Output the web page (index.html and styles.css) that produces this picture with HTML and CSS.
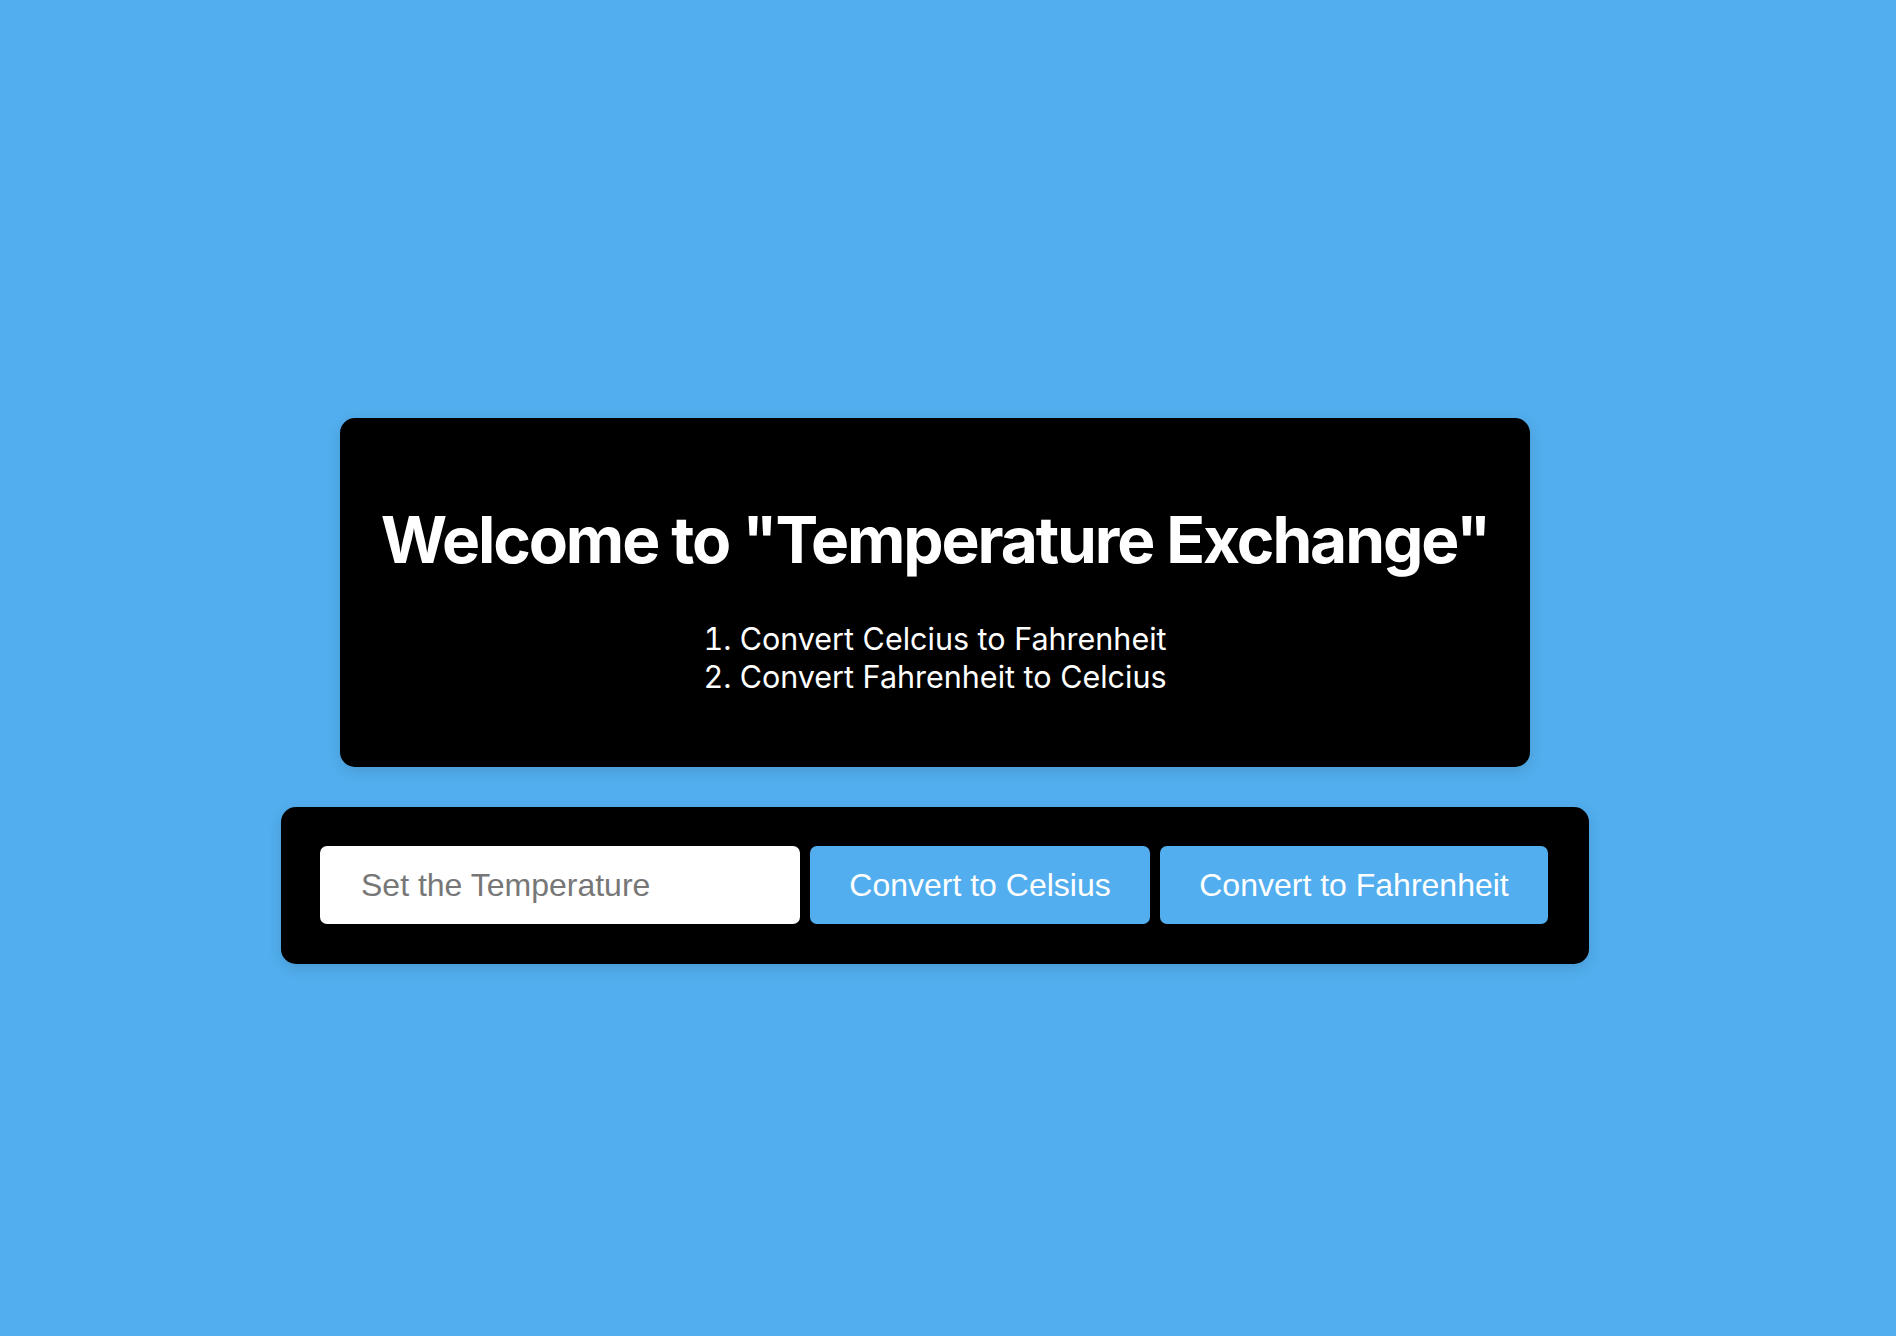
FILE: index.html
```html
<!DOCTYPE html>
<html lang="en">
<head>
<meta charset="utf-8">
<title>Temperature Exchange</title>
<link rel="stylesheet" href="styles.css">
</head>
<body>
<main class="page">
  <section class="intro">
    <h1 class="intro-title">Welcome to "Temperature Exchange"</h1>
    <ol class="intro-list">
      <li>Convert Celcius to Fahrenheit</li>
      <li>Convert Fahrenheit to Celcius</li>
    </ol>
  </section>
  <section class="controls">
    <input class="temp-input" type="text" placeholder="Set the Temperature">
    <button class="btn btn-celsius" type="button">Convert to Celsius</button>
    <button class="btn btn-fahrenheit" type="button">Convert to Fahrenheit</button>
  </section>
</main>
</body>
</html>
```

FILE: styles.css
```css
html, body {
  margin: 0;
  padding: 0;
}

body {
  background: #52aeee;
  font-family: Inter, "Noto Sans", sans-serif;
}

.page {
  min-height: 1336px;
  box-sizing: border-box;
  padding: 418px 26px 0 0;
  display: flex;
  flex-direction: column;
  align-items: center;
  gap: 40px;
}

.intro {
  width: 1190px;
  height: 349px;
  box-sizing: border-box;
  background: #000;
  border-radius: 15px;
  box-shadow: 0 4px 14px rgba(0, 0, 0, 0.12);
  color: #fff;
  display: flex;
  flex-direction: column;
  align-items: center;
  padding-top: 82px;
}

.intro-title {
  margin: 0;
  font-size: 64px;
  font-weight: 700;
  line-height: 80px;
  letter-spacing: -2.1px;
}

.intro-list {
  margin: 40px 0 0;
  padding: 0;
  list-style-position: inside;
  text-align: center;
  font-size: 30.5px;
  line-height: 38px;
}

.controls {
  width: 1308px;
  box-sizing: border-box;
  background: #000;
  border-radius: 15px;
  box-shadow: 0 4px 14px rgba(0, 0, 0, 0.12);
  padding: 39px 41px 40px 39px;
  display: flex;
  gap: 10px;
}

.temp-input,
.btn {
  height: 78px;
  box-sizing: border-box;
  border: none;
  border-radius: 7px;
  font-family: "Liberation Sans", Arial, sans-serif;
  font-size: 32px;
  margin: 0;
}

.temp-input {
  width: 480px;
  padding: 0 0 0 41px;
  background: #fff;
  color: #222;
  outline: none;
}

.temp-input::placeholder {
  color: #777;
}

.btn {
  background: #52aeee;
  color: #fff;
  padding: 0 30px;
}

.btn-celsius {
  width: 340px;
}

.btn-fahrenheit {
  width: 388px;
}
```
